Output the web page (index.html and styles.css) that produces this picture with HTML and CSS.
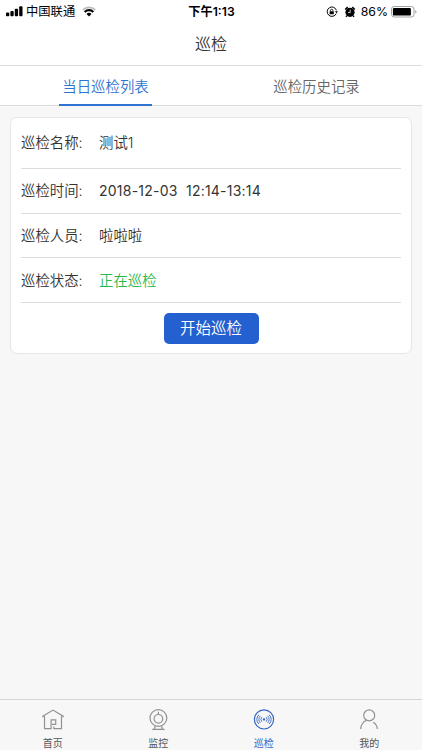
FILE: index.html
```html
<!DOCTYPE html>
<html lang="zh-CN">
<head>
    <meta charset="UTF-8">
    <meta name="viewport" content="width=device-width, initial-scale=1.0">
    <title>巡检</title>
    <link rel="stylesheet" href="styles.css">
</head>
<body>
    <div class="status-bar">
        <div class="status-left">
            <svg class="signal" width="17" height="11" viewBox="0 0 17 11">
                <rect x="0" y="6.6" width="3.3" height="3.6" rx="0.9"/>
                <rect x="4.4" y="5" width="3.3" height="5.2" rx="0.9"/>
                <rect x="8.8" y="2.8" width="3.3" height="7.4" rx="0.9"/>
                <rect x="13.2" y="0.3" width="3.3" height="9.9" rx="0.9"/>
            </svg>
            <span class="carrier">中国联通</span>
            <svg class="wifi" width="14" height="11" viewBox="0 0 14 11">
                <path d="M0.8 3.8a9 9 0 0 1 12.4 0" fill="none" stroke="#bbb" stroke-width="1.8"/>
                <path d="M2.7 5.9a6.1 6.1 0 0 1 8.6 0" fill="none" stroke="#000" stroke-width="2.1"/>
                <path d="M4.5 8a3.6 3.6 0 0 1 5 0L7 10.4z"/>
            </svg>
        </div>
        <div class="status-time">下午1:13</div>
        <div class="status-right">
            <svg width="12" height="12" viewBox="0 0 12 12">
                <path d="M10.2 7.6a4.7 4.7 0 1 1 .2-3.3" fill="none" stroke="#000" stroke-width="1"/>
                <path d="M8.9 5.2h3.1l-1.5 2z"/>
                <rect x="3.6" y="5.2" width="4.2" height="3.1" rx="0.4"/>
                <path d="M4.5 5.3V4.4a1.2 1.2 0 0 1 2.4 0v.9" fill="none" stroke="#000" stroke-width="0.8"/>
            </svg>
            <svg class="alarm" width="12" height="12" viewBox="0 0 12 12">
                <circle cx="6" cy="6.3" r="4.6"/>
                <path d="M1.2 3.5L3.7 1.2M10.8 3.5L8.3 1.2M2.8 9.8L2 10.8M9.2 9.8l.8 1" stroke="#000" stroke-width="1.6"/>
                <path d="M6.2 3.7v2.9H4" fill="none" stroke="#fff" stroke-width="0.8"/>
            </svg>
            <span class="percent">86%</span>
            <svg class="battery" width="26" height="12" viewBox="0 0 26 12">
                <rect x="0.5" y="0.5" width="22.5" height="10.5" rx="2.6" fill="#fff" stroke="#999" stroke-width="0.9"/>
                <rect x="1.9" y="1.9" width="18" height="7.7" rx="1.2"/>
                <path d="M24.3 4v3.6q1.2-.5 1.2-1.8T24.3 4z" fill="#999"/>
            </svg>
        </div>
    </div>

    <h1 class="title">巡检</h1>

    <div class="tabs">
        <div class="tab active"><span>当日巡检列表</span></div>
        <div class="tab"><span>巡检历史记录</span></div>
    </div>

    <div class="content">
        <div class="card">
            <div class="row first">
                <span class="label">巡检名称:</span>
                <span class="value">测试1</span>
            </div>
            <div class="row">
                <span class="label">巡检时间:</span>
                <span class="value date">2018-12-03&nbsp; 12:14-13:14</span>
            </div>
            <div class="row">
                <span class="label">巡检人员:</span>
                <span class="value">啦啦啦</span>
            </div>
            <div class="row">
                <span class="label">巡检状态:</span>
                <span class="value running">正在巡检</span>
            </div>
            <button class="start-btn">开始巡检</button>
        </div>
    </div>

    <div class="tab-bar">
        <div class="bar-item">
            <svg width="22" height="22" viewBox="0 0 22 22">
                <path d="M.8 8.3V7.2L11 1.1l10.2 6.1v1.1M2.5 7v12.6h6.6V10.8h4.6v4.5H9.9M19.5 7v12.6h-7.6v-2.1"/>
            </svg>
            <span>首页</span>
        </div>
        <div class="bar-item">
            <svg width="22" height="22" viewBox="0 0 22 22">
                <circle cx="11.4" cy="9" r="8.4"/>
                <circle cx="11.4" cy="9.8" r="4.3"/>
                <path d="M11.4 2.8v2.3M8.2 16.8l-.7 3.2M14.6 16.8l.7 3.2M5.2 20.3h12.4"/>
            </svg>
            <span>监控</span>
        </div>
        <div class="bar-item active">
            <svg width="22" height="22" viewBox="0 0 22 22">
                <circle cx="11" cy="10.4" r="9.6"/>
                <circle class="dot" cx="11" cy="10.4" r="0.6"/>
                <path class="waves" d="M8.9 8.1a3.4 3.4 0 0 0 0 4.6M7.3 6.8a5.3 5.3 0 0 0 0 7.2M5.7 5.8a7.2 7.2 0 0 0 0 9.2M13.1 8.1a3.4 3.4 0 0 1 0 4.6M14.7 6.8a5.3 5.3 0 0 1 0 7.2M16.3 5.8a7.2 7.2 0 0 1 0 9.2"/>
            </svg>
            <span>巡检</span>
        </div>
        <div class="bar-item">
            <svg width="22" height="22" viewBox="0 0 22 22">
                <circle cx="11.2" cy="6.4" r="5.5"/>
                <path d="M2.7 20c.2-4.2 2.2-7 5.7-8.7M15.2 13.2c2.4 1.4 3.9 3.8 4.1 6.8"/>
            </svg>
            <span>我的</span>
        </div>
    </div>
</body>
</html>
```

FILE: styles.css
```css
:root {
    --blue: #2f73d0;
    --line: #dcdcdc;
    --text-color: #333;
}

* {
    box-sizing: border-box;
}

body {
    font-family: Inter, "Noto Sans CJK SC", sans-serif;
    background-color: #f7f7f7;
    color: var(--text-color);
    margin: 0;
    height: 100vh;
    display: flex;
    flex-direction: column;
    overflow: hidden;
}
.status-bar {
    display: grid;
    grid-template-columns: 1fr auto 1fr;
    align-items: center;
    height: 22px;
    padding: 0 5px 0 6px;
    background-color: #fff;
    color: #000;
    font-size: 12px;
    line-height: 22px;
}
.status-left, .status-right {
    display: flex;
    align-items: center;
}
.status-right {
    justify-content: flex-end;
}
.carrier {
    margin-left: 3px;
    padding-top: 1px;
    font-size: 12.3px;
}
.wifi {
    margin-left: 7px;
}
.status-time {
    padding-top: 1px;
    font-size: 12.2px;
    font-weight: 600;
}
.alarm {
    margin-left: 6px;
}
.percent {
    margin: 0 3px 0 5px;
    font-size: 12.3px;
}
.title {
    height: 44px;
    margin: 0;
    border-bottom: 1px solid var(--line);
    background-color: #fff;
    font-size: 16px;
    font-weight: 350;
    line-height: 45px;
    text-align: center;
}
.tabs {
    display: flex;
    height: 40px;
    border-bottom: 1px solid var(--line);
    background-color: #fff;
    font-size: 14.4px;
    font-weight: 350;
    line-height: 41px;
}
.tab {
    flex: 1;
    display: flex;
    justify-content: center;
    color: #666;
}
.tab span {
    height: 40px;
    padding: 0 3px;
}
.tab.active span {
    color: var(--blue);
    border-bottom: 2px solid var(--blue);
}
.content {
    flex: 1;
    padding: 11px 10px;
}
.card {
    height: 237px;
    padding: 0 10px;
    border: 1px solid #e6e6e6;
    border-radius: 7px;
    background-color: #fff;
    font-size: 14.4px;
    font-weight: 350;
}
.row {
    display: flex;
    align-items: center;
    height: 44.7px;
    padding-bottom: 2px;
    border-bottom: 1px solid var(--line);
}
.row.first {
    height: 51px;
    padding-bottom: 4px;
}
.label {
    width: 78px;
}
.date {
    padding-top: 1px;
    font-size: 14px;
    font-weight: 400;
    letter-spacing: 0.23px;
}
.running {
    color: #27b84f;
}
.start-btn {
    display: block;
    width: 95px;
    height: 31px;
    margin: 10px auto 0;
    padding: 0;
    border: none;
    border-radius: 5px;
    background-color: #2460d0;
    color: #fff;
    font-family: inherit;
    font-size: 15.5px;
    font-weight: 350;
    line-height: 32px;
}
.tab-bar {
    display: flex;
    height: 51px;
    border-top: 1px solid #d5d5d5;
    background-color: #f7f7f7;
}
.bar-item {
    flex: 1;
    display: flex;
    flex-direction: column;
    align-items: center;
    padding-top: 9px;
    color: #555;
    font-size: 10px;
    line-height: 14px;
}
.bar-item svg {
    fill: none;
    stroke: #929292;
    stroke-width: 1.2;
}
.bar-item span {
    margin-top: 5px;
}
.bar-item.active {
    color: #3666c4;
}
.bar-item.active svg {
    stroke: #3666c4;
}
.dot {
    fill: #3666c4;
}
.waves {
    stroke-width: 0.9;
}
```
